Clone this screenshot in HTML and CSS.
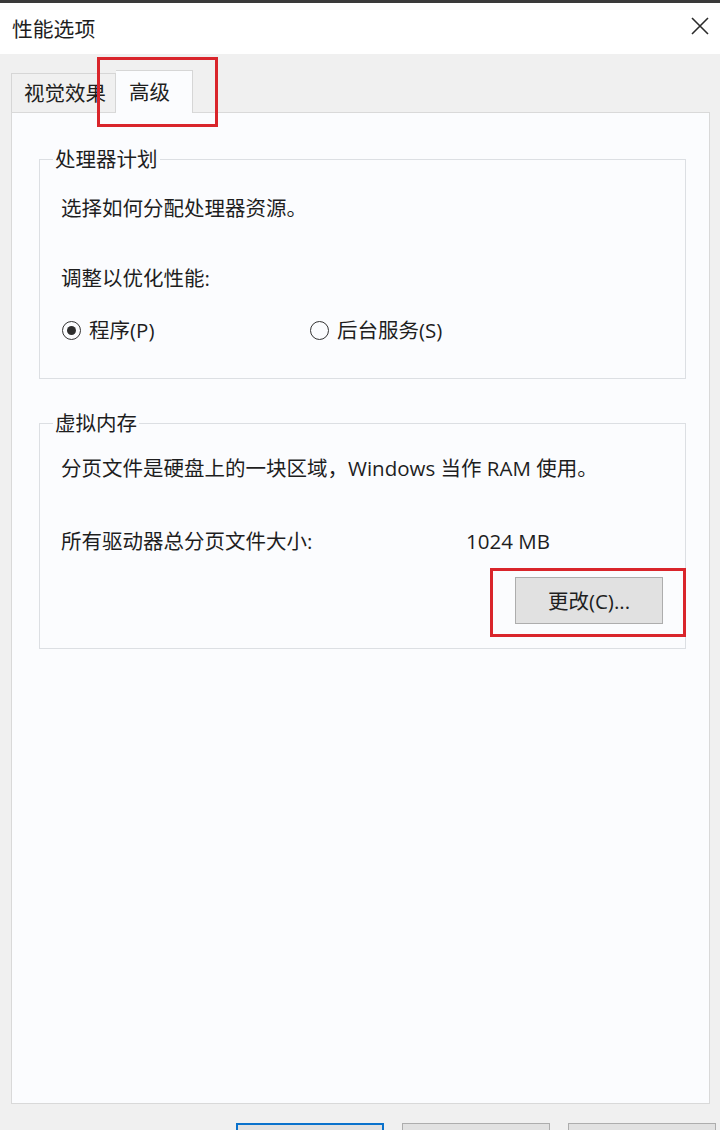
FILE: index.html
```html
<!DOCTYPE html>
<html lang="zh-CN">
<head>
<meta charset="utf-8">
<title>性能选项</title>
<link rel="stylesheet" href="styles.css">
</head>
<body>
<div class="window">
  <div class="topline"></div>
  <header class="titlebar">
    <span class="title">性能选项</span>
    <span class="close" aria-label="关闭">
      <svg width="18" height="18" viewBox="0 0 18 18"><path d="M1 1L17 17M17 1L1 17" stroke="#2b2b2b" stroke-width="1.6" fill="none"/></svg>
    </span>
  </header>
  <div class="client">
    <div class="tabs">
      <div class="tab">视觉效果</div>
      <div class="tab active">高级</div>
      <span class="mark mark-tab"></span>
    </div>
    <div class="panel">
      <fieldset class="group group-cpu">
        <legend>处理器计划</legend>
        <p class="line">选择如何分配处理器资源。</p>
        <p class="line line-gap">调整以优化性能:</p>
        <div class="radios">
          <label class="radio-item"><span class="radio checked"></span>程序(P)</label>
          <label class="radio-item"><span class="radio"></span>后台服务(S)</label>
        </div>
      </fieldset>
      <fieldset class="group group-vm">
        <legend>虚拟内存</legend>
        <p class="line">分页文件是硬盘上的一块区域，Windows 当作 RAM 使用。</p>
        <div class="size-row">
          <span class="size-label">所有驱动器总分页文件大小:</span>
          <span class="size-value">1024 MB</span>
        </div>
        <div class="btn-row">
          <div class="btn-wrap">
            <span class="btn">更改(C)...</span>
            <span class="mark mark-btn"></span>
          </div>
        </div>
      </fieldset>
    </div>
    <div class="footer">
      <span class="btn btn-foot primary"></span>
      <span class="btn btn-foot"></span>
      <span class="btn btn-foot"></span>
    </div>
  </div>
</div>
</body>
</html>
```

FILE: styles.css
```css
* { box-sizing: border-box; }
html, body { margin: 0; padding: 0; }
body {
  width: 720px;
  height: 1130px;
  overflow: hidden;
  background: #f0f0f0;
  font-family: "Open Sans", "Noto Sans CJK SC", sans-serif;
  font-size: 20.5px;
  line-height: 24px;
  color: #1e1e1e;
}
.window { width: 720px; height: 1130px; display: flex; flex-direction: column; }
.topline { height: 3px; background: #3a3a3a; flex: none; }
.titlebar {
  height: 51px;
  flex: none;
  background: #ffffff;
  display: flex;
  align-items: center;
  justify-content: space-between;
  padding: 0 11px 0 12px;
}
.title { font-size: 20.8px; }
.close { display: flex; margin-bottom: 6px; }
.client { flex: 1; background: #f0f0f0; display: flex; flex-direction: column; }
.tabs {
  position: relative;
  height: 58px;
  flex: none;
  display: flex;
  align-items: flex-end;
  padding-left: 11px;
}
.tab {
  height: 39px;
  padding: 0 9px 0 12px;
  display: flex;
  align-items: center;
  border: 1px solid #d6d6d6;
  border-bottom: none;
  background: #f0f0f0;
  font-size: 20.5px;
}
.tab.active {
  height: 43px;
  margin-bottom: -1px;
  padding: 0 22px 0 13px;
  background: #fbfcfe;
  border-left: none;
  position: relative;
  z-index: 1;
}
.mark {
  position: absolute;
  border: 3px solid #d9252b;
  z-index: 2;
  pointer-events: none;
}
.mark-tab { left: 97px; top: 3px; width: 121px; height: 70px; }
.panel {
  height: 992px;
  flex: none;
  margin: 0 10px 0 11px;
  border: 1px solid #d9d9d9;
  background: #fbfcfe;
  padding-top: 34px;
}
.group {
  margin: 0 23px 0 27px;
  padding: 0 0 0 21px;
  border: 1px solid #dcdfe3;
  min-width: 0;
}
.group legend {
  margin-left: -8px;
  padding: 0 2px;
  font-size: 20.5px;
  line-height: 24px;
}
.line { margin: 0; white-space: nowrap; }
.group-cpu { padding-top: 25px; padding-bottom: 36px; }
.group-cpu .line-gap { margin-top: 46px; }
.radios {
  margin-top: 28px;
  display: grid;
  grid-template-columns: 248px auto;
}
.radio-item { display: flex; align-items: center; gap: 8px; margin-left: 1px; }
.radio {
  width: 19px;
  height: 19px;
  border: 1.6px solid #333;
  border-radius: 50%;
  display: flex;
  align-items: center;
  justify-content: center;
}
.radio.checked::after {
  content: "";
  width: 9px;
  height: 9px;
  border-radius: 50%;
  background: #2e2e2e;
}
.group-vm { margin-top: 32px; padding-top: 21px; padding-bottom: 24px; }
.size-row { margin-top: 49px; display: grid; grid-template-columns: 405px auto; white-space: nowrap; }
.btn-row { display: flex; justify-content: flex-end; padding-right: 22px; margin-top: 24px; }
.btn-wrap { position: relative; display: flex; }
.btn {
  width: 148px;
  height: 47px;
  display: flex;
  align-items: center;
  justify-content: center;
  background: #e1e1e1;
  border: 1px solid #adadad;
  font-size: 20.5px;
}
.mark-btn { left: -25px; top: -9px; right: -23px; bottom: -13px; }
.footer { display: flex; gap: 18px; padding: 19px 0 0 236px; }
.btn-foot { flex: none; }
.btn-foot.primary { border: 2px solid #0a72cc; }
```
